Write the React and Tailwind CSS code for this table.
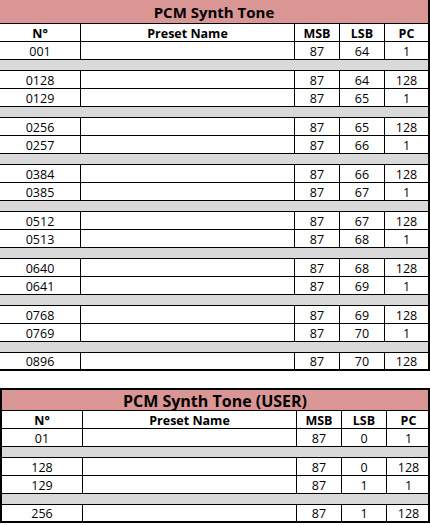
const cols = "grid grid-cols-[81px_214px_45px_45px_43px]";

function Row({ n, msb, lsb, pc, last }) {
  return (
    <div className={`${cols} ${last ? "h-[16px]" : "h-[18px] border-b border-black"} text-[12.5px] leading-none`}>
      <div className="flex items-center justify-center pt-[3px] border-r border-black">{n}</div>
      <div className="border-r border-black"></div>
      <div className="flex items-center justify-center pt-[3px] border-r border-black">{msb}</div>
      <div className="flex items-center justify-center pt-[3px] border-r border-black">{lsb}</div>
      <div className="flex items-center justify-center pt-[3px]">{pc}</div>
    </div>
  );
}

function Gap() {
  return <div className="h-[11px] bg-[#d9d9d9] border-b border-black"></div>;
}

function Header() {
  return (
    <div className={`${cols} h-[18px] border-b border-black text-[12.5px] font-bold leading-none`}>
      <div className="flex items-center justify-center pt-[3px] border-r border-black">N°</div>
      <div className="flex items-center justify-center pt-[3px] border-r border-black">Preset Name</div>
      <div className="flex items-center justify-center pt-[3px] border-r border-black">MSB</div>
      <div className="flex items-center justify-center pt-[3px] border-r border-black">LSB</div>
      <div className="flex items-center justify-center pt-[3px]">PC</div>
    </div>
  );
}

const t1 = [
  ["001", 87, 64, 1],
  null,
  ["0128", 87, 64, 128],
  ["0129", 87, 65, 1],
  null,
  ["0256", 87, 65, 128],
  ["0257", 87, 66, 1],
  null,
  ["0384", 87, 66, 128],
  ["0385", 87, 67, 1],
  null,
  ["0512", 87, 67, 128],
  ["0513", 87, 68, 1],
  null,
  ["0640", 87, 68, 128],
  ["0641", 87, 69, 1],
  null,
  ["0768", 87, 69, 128],
  ["0769", 87, 70, 1],
  null,
  ["0896", 87, 70, 128],
];

const t2 = [
  ["01", 87, 0, 1],
  null,
  ["128", 87, 0, 128],
  ["129", 87, 1, 1],
  null,
  ["256", 87, 1, 128],
];

function Rows({ data }) {
  return data.map((r, i) =>
    r ? (
      <Row key={i} n={r[0]} msb={r[1]} lsb={r[2]} pc={r[3]} last={i === data.length - 1} />
    ) : (
      <Gap key={i} />
    )
  );
}

export default function App() {
  return (
    <div className="w-[430px] h-[525px] bg-white text-black overflow-hidden" style={{ fontFamily: '"Open Sans", "Noto Sans", sans-serif' }}>
      <div className="w-[430px] border-r-2 border-b-2 border-black">
        <div className="h-[24px] bg-[#da9694] border-b border-black flex items-center justify-center pt-[2px] text-[15px] font-bold leading-none">
          PCM Synth Tone
        </div>
        <Header />
        <Rows data={t1} />
      </div>
      <div className="mt-[17px] w-[430px] border-2 border-black">
        <div className="h-[21px] bg-[#da9694] border-b border-black flex items-center justify-center pt-[2px] text-[16px] font-bold leading-none">
          PCM Synth Tone (USER)
        </div>
        <Header />
        <Rows data={t2} />
      </div>
    </div>
  );
}
